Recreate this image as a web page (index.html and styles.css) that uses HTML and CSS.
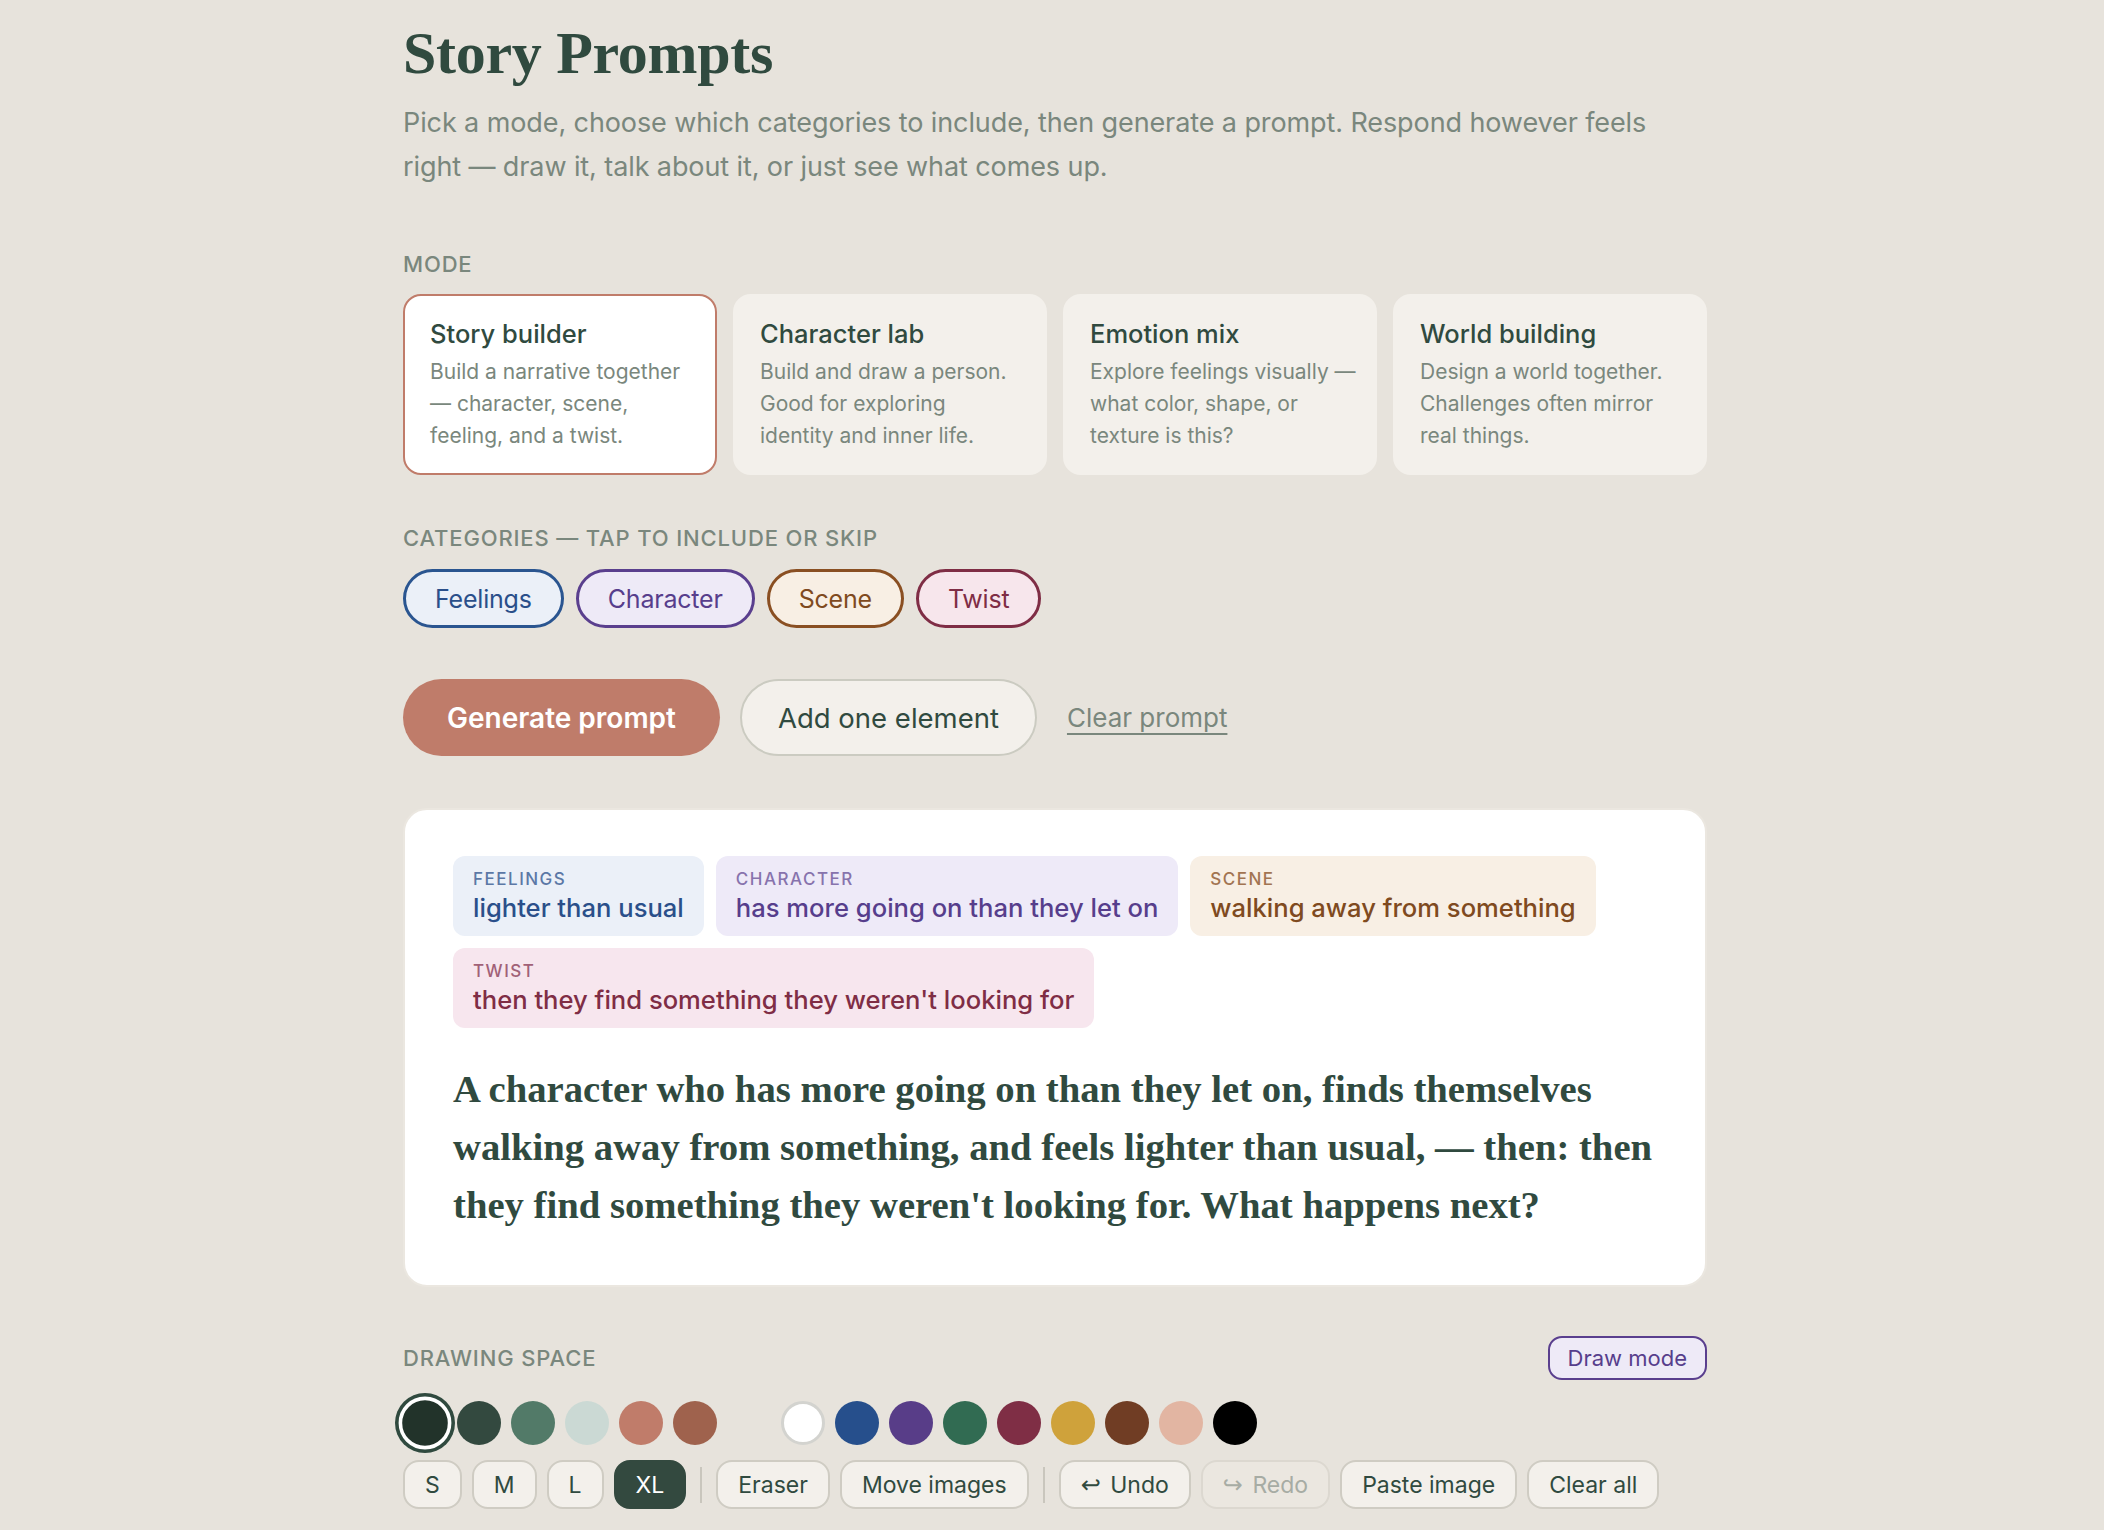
FILE: index.html
```html
<!DOCTYPE html>
<html lang="en">
<head>
<meta charset="utf-8">
<title>Story Prompts</title>
<link rel="stylesheet" href="styles.css">
</head>
<body>
<main class="page">
  <h1 class="title">Story Prompts</h1>
  <p class="intro">Pick a mode, choose which categories to include, then generate a prompt. Respond however feels right — draw it, talk about it, or just see what comes up.</p>

  <div class="label label-mode">Mode</div>
  <div class="modes">
    <div class="mode mode-active">
      <div class="mode-title">Story builder</div>
      <div class="mode-desc">Build a narrative together — character, scene, feeling, and a twist.</div>
    </div>
    <div class="mode">
      <div class="mode-title">Character lab</div>
      <div class="mode-desc">Build and draw a person. Good for exploring<br>identity and inner life.</div>
    </div>
    <div class="mode">
      <div class="mode-title">Emotion mix</div>
      <div class="mode-desc">Explore feelings visually — what color, shape, or texture is this?</div>
    </div>
    <div class="mode">
      <div class="mode-title">World building</div>
      <div class="mode-desc">Design a world together. Challenges often mirror real things.</div>
    </div>
  </div>

  <div class="label label-cats">Categories — tap to include or skip</div>
  <div class="chips">
    <span class="chip chip-feel">Feelings</span>
    <span class="chip chip-char">Character</span>
    <span class="chip chip-scene">Scene</span>
    <span class="chip chip-twist">Twist</span>
  </div>

  <div class="actions">
    <button class="btn-primary">Generate prompt</button>
    <button class="btn-secondary">Add one element</button>
    <a class="link" href="#">Clear prompt</a>
  </div>

  <section class="prompt">
    <div class="tags">
      <div class="tag tag-feel"><div class="tag-label">Feelings</div><div class="tag-value">lighter than usual</div></div>
      <div class="tag tag-char"><div class="tag-label">Character</div><div class="tag-value">has more going on than they let on</div></div>
      <div class="tag tag-scene"><div class="tag-label">Scene</div><div class="tag-value">walking away from something</div></div>
      <div class="tag tag-twist"><div class="tag-label">Twist</div><div class="tag-value">then they find something they weren't looking for</div></div>
    </div>
    <p class="prompt-text">A character who has more going on than they let on, finds themselves walking away from something, and feels lighter than usual, — then: then they find something they weren't looking for. What happens next?</p>
  </section>

  <div class="draw-head">
    <div class="label">Drawing space</div>
    <button class="btn-draw">Draw mode</button>
  </div>

  <div class="swatches">
    <span class="sw sw-selected" style="background:#22332a"></span>
    <span class="sw" style="background:#33493f"></span>
    <span class="sw" style="background:#527a68"></span>
    <span class="sw" style="background:#cbd9d4"></span>
    <span class="sw" style="background:#c07c6a"></span>
    <span class="sw" style="background:#9f624d"></span>
    <span class="sw sw-blank"></span>
    <span class="sw sw-white" style="background:#ffffff"></span>
    <span class="sw" style="background:#264f8c"></span>
    <span class="sw" style="background:#583d88"></span>
    <span class="sw" style="background:#316b52"></span>
    <span class="sw" style="background:#7f2e45"></span>
    <span class="sw" style="background:#cfa23b"></span>
    <span class="sw" style="background:#703d24"></span>
    <span class="sw" style="background:#e2b5a2"></span>
    <span class="sw" style="background:#000000"></span>
  </div>

  <div class="tools">
    <button class="tool">S</button>
    <button class="tool">M</button>
    <button class="tool">L</button>
    <button class="tool tool-active">XL</button>
    <span class="sep"></span>
    <button class="tool">Eraser</button>
    <button class="tool">Move images</button>
    <span class="sep"></span>
    <button class="tool"><span class="glyph">↩</span> Undo</button>
    <button class="tool tool-disabled"><span class="glyph">↪</span> Redo</button>
    <button class="tool">Paste image</button>
    <button class="tool">Clear all</button>
  </div>
</main>
</body>
</html>
```

FILE: styles.css
```css
* { box-sizing: border-box; }

html, body {
  margin: 0;
  padding: 0;
  background: #e7e3dc;
}

body {
  font-family: "Inter", "Noto Sans", sans-serif;
  color: #304a3f;
  padding-left: 6px;
}

.page {
  width: 1304px;
  margin: 0 auto;
  padding: 20px 0 20px;
}

.title {
  margin: 0;
  font-family: "Liberation Serif", "DejaVu Serif", serif;
  font-weight: 700;
  font-size: 60px;
  line-height: 66px;
  letter-spacing: -0.3px;
  color: #304a3f;
}

.intro {
  margin: 15px 0 0;
  font-size: 27px;
  line-height: 44px;
  letter-spacing: -0.1px;
  color: #7a877d;
}

.label {
  font-size: 22px;
  line-height: 28px;
  font-weight: 500;
  letter-spacing: 0.85px;
  text-transform: uppercase;
  color: #7a877d;
}

.label-mode { margin-top: 61px; }

.modes {
  display: grid;
  grid-template-columns: repeat(4, 1fr);
  gap: 16px;
  margin-top: 16px;
}

.mode {
  background: #f3f0eb;
  border: 2px solid #f3f0eb;
  border-radius: 18px;
  padding: 22px 15px 21px 25px;
}

.mode-active {
  background: #ffffff;
  border-color: #c07c6a;
}

.mode-title {
  font-size: 25.5px;
  line-height: 32px;
  font-weight: 500;
  color: #304a3f;
}

.mode-desc {
  margin-top: 6px;
  font-size: 21px;
  line-height: 32px;
  color: #7a877d;
}

.label-cats { margin-top: 49px; }

.chips {
  display: flex;
  gap: 12px;
  margin-top: 17px;
}

.chip {
  display: inline-flex;
  align-items: center;
  height: 59px;
  padding: 0 29px;
  border: 3px solid;
  border-radius: 999px;
  font-size: 25px;
  letter-spacing: -0.2px;
}

.chip-feel { background: #ebf0f8; border-color: #2a5590; color: #2a4f8a; }
.chip-char { background: #eeeaf7; border-color: #5a3f8e; color: #573e8c; }
.chip-scene { background: #f8efe4; border-color: #8a4f22; color: #7f4a20; }
.chip-twist { background: #f7e6ec; border-color: #7f2d45; color: #7f2d45; }

.actions {
  display: flex;
  align-items: center;
  gap: 20px;
  margin-top: 51px;
}

.btn-primary, .btn-secondary {
  height: 77px;
  border-radius: 999px;
  font-family: inherit;
}

.btn-primary {
  padding: 0 44px;
  background: #bf7c6a;
  border: none;
  color: #ffffff;
  font-size: 28px;
  font-weight: 600;
}

.btn-secondary {
  padding: 0 36px;
  background: #f3f0eb;
  border: 2px solid #cbcbc1;
  color: #304a3f;
  font-size: 27.5px;
  font-weight: 400;
}

.link {
  padding: 0 10px;
  font-size: 26px;
  color: #7a877d;
  text-decoration: underline;
  text-decoration-thickness: 1.5px;
  text-underline-offset: 6px;
}

.prompt {
  margin-top: 52px;
  background: #ffffff;
  border: 2px solid #ebe7e0;
  border-radius: 24px;
  padding: 46px 48px 51px;
}

.tags {
  display: flex;
  flex-wrap: wrap;
  gap: 12px;
}

.tag {
  border-radius: 12px;
  padding: 12px 20px 10px;
}

.tag-label {
  font-size: 17px;
  line-height: 22px;
  font-weight: 500;
  letter-spacing: 1.5px;
  text-transform: uppercase;
}

.tag-value {
  font-size: 25.6px;
  line-height: 36px;
  font-weight: 500;
}

.tag-feel { background: #ebf0f8; }
.tag-feel .tag-label { color: #5b78a6; }
.tag-feel .tag-value { color: #2a4f8a; }
.tag-char { background: #eeeaf8; }
.tag-char .tag-label { color: #8773ad; }
.tag-char .tag-value { color: #573e8c; }
.tag-scene { background: #f8efe4; }
.tag-scene .tag-label { color: #a27451; }
.tag-scene .tag-value { color: #7f4a20; }
.tag-twist { background: #f7e6ee; }
.tag-twist .tag-label { color: #a16177; }
.tag-twist .tag-value { color: #7f2d45; }

.prompt-text {
  margin: 32px 0 0;
  font-family: "Liberation Serif", "DejaVu Serif", serif;
  font-weight: 700;
  font-size: 38.7px;
  line-height: 58px;
  color: #304a3f;
}

.draw-head {
  display: flex;
  justify-content: space-between;
  align-items: center;
  margin-top: 49px;
  height: 44px;
}

.btn-draw {
  height: 44px;
  padding: 0 18px;
  border: 2px solid #5a3f8e;
  border-radius: 14px;
  background: #eeeaf7;
  color: #573e8c;
  font-family: inherit;
  font-size: 22px;
}

.swatches {
  display: flex;
  gap: 10px;
  margin-top: 21px;
}

.sw {
  width: 44px;
  height: 44px;
  border-radius: 50%;
  flex: none;
}

.sw-selected {
  border: 3px solid #ffffff;
  box-shadow: 0 0 0 3px #304a3f;
  transform: scale(1.2);
}

.sw-blank { background: transparent; }

.sw-white { border: 3px solid #d3d3cf; }

.tools {
  display: flex;
  align-items: center;
  gap: 10px;
  margin-top: 15px;
}

.tool {
  height: 49px;
  padding: 0 20px;
  border: 2px solid #cfccc3;
  border-radius: 16px;
  background: #f3f0eb;
  color: #304a3f;
  font-family: inherit;
  font-size: 23px;
}

.tool-active {
  background: #33493f;
  border-color: #33493f;
  color: #ffffff;
}

.tool-disabled {
  background: #ebe7e0;
  border-color: #dcd8d0;
  color: #a7aca4;
}

.glyph {
  font-family: "DejaVu Sans", sans-serif;
  font-size: 24px;
  margin-right: 3px;
}

.sep {
  width: 2px;
  height: 36px;
  margin: 0 4px;
  background: #c9c6bd;
}
```
